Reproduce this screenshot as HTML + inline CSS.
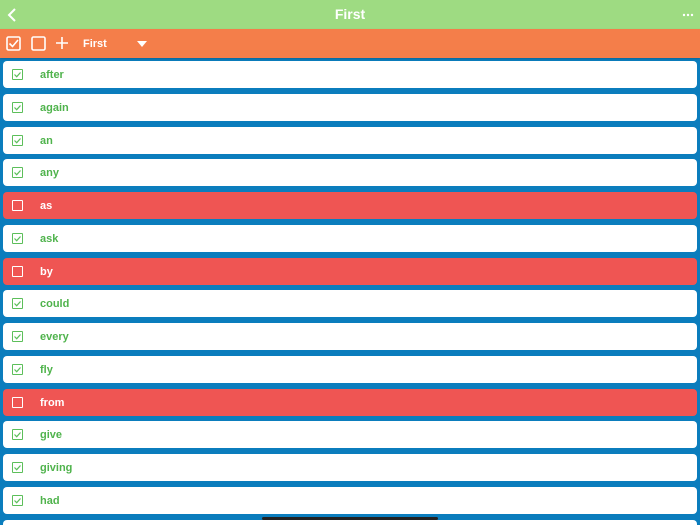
<!DOCTYPE html>
<html style="margin:0;width:700px;height:525px;overflow:hidden"><head><style>
body{margin:0;width:700px;height:525px;overflow:hidden;background:#0b7dbd;font-family:"Liberation Sans",Arial,sans-serif;position:relative}
.nav{position:absolute;left:0;top:0;width:700px;height:29px;background:#9edb82}
.nav .t{position:absolute;left:0;right:0;top:6px;text-align:center;color:#fff;font-weight:bold;font-size:14px}
.tb{position:absolute;left:0;top:29px;width:700px;height:29px;background:#f47e4a;box-shadow:0 1px 2px rgba(0,0,0,.2)}
.row{position:absolute;left:3px;width:694px;height:27px;background:#fff;border-radius:4px}
.row.r{background:#ef5553}
.row .cb{position:absolute;left:9px;top:8px;width:9px;height:9px;border:1.3px solid #5cbf5a;border-radius:1px}
.row.r .cb{border-color:#fff}
.row .w{position:absolute;left:37px;top:7px;font-size:11px;line-height:14px;font-weight:bold;color:#4fb34c}
.row.r .w{color:#fff}
</style></head><body>
<div class="nav"><svg style="position:absolute;left:7px;top:8px" width="10" height="14"><path d="M8 1L2 7L8 13" stroke="#fff" stroke-width="2" fill="none"/></svg>
<div class="t">First</div>
<svg style="position:absolute;left:682px;top:13px" width="12" height="4"><circle cx="2" cy="2" r="1.2" fill="#fff"/><circle cx="6" cy="2" r="1.2" fill="#fff"/><circle cx="10" cy="2" r="1.2" fill="#fff"/></svg></div>
<div class="tb">
<svg style="position:absolute;left:6px;top:7px" width="15" height="15"><rect x="1" y="1" width="13" height="13" rx="1.5" stroke="#fff" stroke-width="1.6" fill="none"/><path d="M3.5 7.5L6.5 10.5L12 4" stroke="#fff" stroke-width="1.6" fill="none"/></svg>
<svg style="position:absolute;left:31px;top:7px" width="15" height="15"><rect x="1" y="1" width="13" height="13" rx="1.5" stroke="#fff" stroke-width="1.6" fill="none"/></svg>
<svg style="position:absolute;left:55px;top:7px" width="14" height="14"><path d="M7 1V13M1 7H13" stroke="#fff" stroke-width="1.6"/></svg>
<div style="position:absolute;left:83px;top:9px;color:#fff;font-size:11px;line-height:13px;font-weight:bold">First</div>
<svg style="position:absolute;left:137px;top:12px" width="10" height="6"><path d="M0 0H10L5 6Z" fill="#fff"/></svg>
</div>
<div id="l"></div>
<script>
var w=["after","again","an","any","as","ask","by","could","every","fly","from","give","giving","had",""];var red={as:1,by:1,from:1};var h="";
for(var i=0;i<w.length;i++){var t=61+i*32.75;var r=red[w[i]];
h+='<div class="row'+(r?' r':'')+'" style="top:'+t+'px;'+(i==14?'height:6px;border-radius:4px 4px 0 0':'')+'">'+(i==14?'':'<div class="cb">'+(r?'':'<svg width="9" height="9" style="position:absolute;left:0;top:0"><path d="M1.5 4.5L3.7 6.7L7.5 2.5" stroke="#5cbf5a" stroke-width="1.2" fill="none"/></svg>')+'</div><div class="w">'+w[i]+'</div>')+'</div>';}
document.getElementById("l").innerHTML=h;
</script>
<div style="position:absolute;left:262px;top:517px;width:176px;height:3px;border-radius:2px;background:#222"></div>
</body></html>
